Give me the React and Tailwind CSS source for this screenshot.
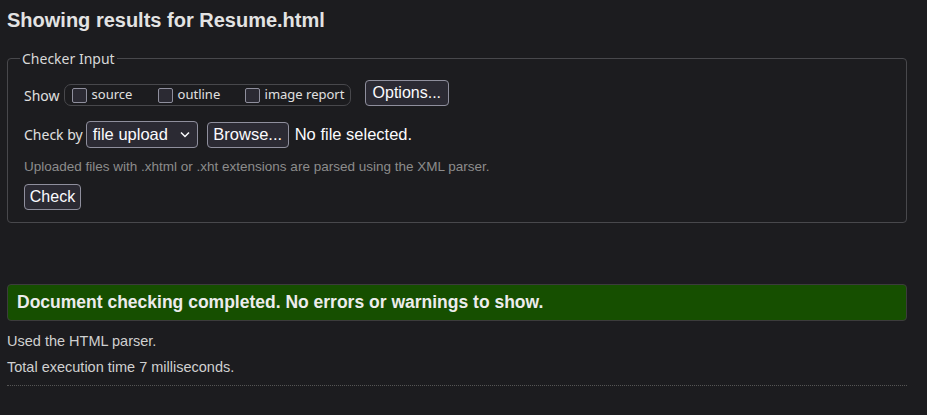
import React from "react";

function Box() {
  return (
    <span className="inline-block w-[15px] h-[15px] rounded-[2px] border border-[#8f8f9d] bg-[#2b2a33] shrink-0" />
  );
}

function Chevron() {
  return (
    <svg width="10" height="7" viewBox="0 0 10 7" className="ml-auto">
      <path d="M1 1.5 L5 5.5 L9 1.5" fill="none" stroke="#fbfbfe" strokeWidth="1.5" />
    </svg>
  );
}

export default function App() {
  const ui = "font-['Noto_Sans',sans-serif]";
  const ar = "font-['Liberation_Sans',Arial,sans-serif]";
  const btn =
    "rounded-[4px] border border-[#8f8f9d] bg-[#2b2a33] text-[#fbfbfe] leading-none flex items-center";
  return (
    <div className={`min-h-[415px] bg-[#1c1c1f] px-[7px] pt-[9px] text-[#e0e0e0] ${ar}`}>
      <h2 className="text-[20px] leading-[23px] font-bold text-[#e3e3e3]">
        Showing results for Resume.html
      </h2>
      <fieldset className="mt-[18px] border border-[#48484c] rounded-[4px] px-[16px] pb-[12px] m-0 w-[900px]">
        <legend className={`px-[2px] ml-[-4px] text-[14px] leading-[17px] text-[#d8d8d8] ${ui}`}>
          Checker Input
        </legend>
        <div className="mt-[13px] flex items-center h-[26px]">
          <span className={`mt-[4px] text-[14px] text-[#e0e0e0] ${ui}`}>Show</span>
          <div className={`self-end ml-[4px] h-[22px] w-[287px] rounded-[7px] border border-[#48484c] flex items-center pl-[7px] text-[13px] text-[#e0e0e0] ${ui}`}>
            <span className="w-[86px] flex items-center">
              <Box />
              <span className="ml-[5px]">source</span>
            </span>
            <span className="w-[87px] flex items-center">
              <Box />
              <span className="ml-[5px]">outline</span>
            </span>
            <span className="flex items-center">
              <Box />
              <span className="ml-[5px]">image report</span>
            </span>
          </div>
          <button className={`ml-[14px] h-[26px] px-[7px] text-[16px] ${btn}`}>Options...</button>
        </div>
        <div className="mt-[15px] flex items-center h-[27px]">
          <span className={`text-[14px] text-[#e0e0e0] ${ui}`}>Check by</span>
          <div className="ml-[3px] h-[27px] w-[112px] rounded-[4px] border border-[#8f8f9d] bg-[#2b2a33] text-[#fbfbfe] text-[16.5px] flex items-center pl-[6px] pr-[7px]">
            <span>file upload</span>
            <Chevron />
          </div>
          <button className={`ml-[9px] h-[26px] w-[82px] justify-center text-[16.5px] ${btn}`}>Browse...</button>
          <span className="ml-[6px] text-[16.5px] text-[#fbfbfe]">No file selected.</span>
        </div>
        <p className="mt-[10px] text-[13.5px] leading-[17px] text-[#8c8c8c]">
          Uploaded files with .xhtml or .xht extensions are parsed using the XML parser.
        </p>
        <div className="mt-[9px] flex">
          <button className={`h-[26px] w-[57px] justify-center text-[16px] ${btn}`}>Check</button>
        </div>
      </fieldset>
      <div className="mt-[61px] w-[900px] h-[37px] rounded-[4px] border border-[#3c3c3c] bg-[#164f00] flex items-center px-[9px]">
        <span className="text-[17.5px] font-bold text-[#ececec]">
          Document checking completed. No errors or warnings to show.
        </span>
      </div>
      <p className="mt-[12px] text-[14.5px] leading-[17px] text-[#d0d0d0]">Used the HTML parser.</p>
      <p className="mt-[9px] text-[14.5px] leading-[17px] text-[#d0d0d0]">Total execution time 7 milliseconds.</p>
      <div className="mt-[9px] w-[900px] border-t border-dotted border-[#555]" />
    </div>
  );
}
